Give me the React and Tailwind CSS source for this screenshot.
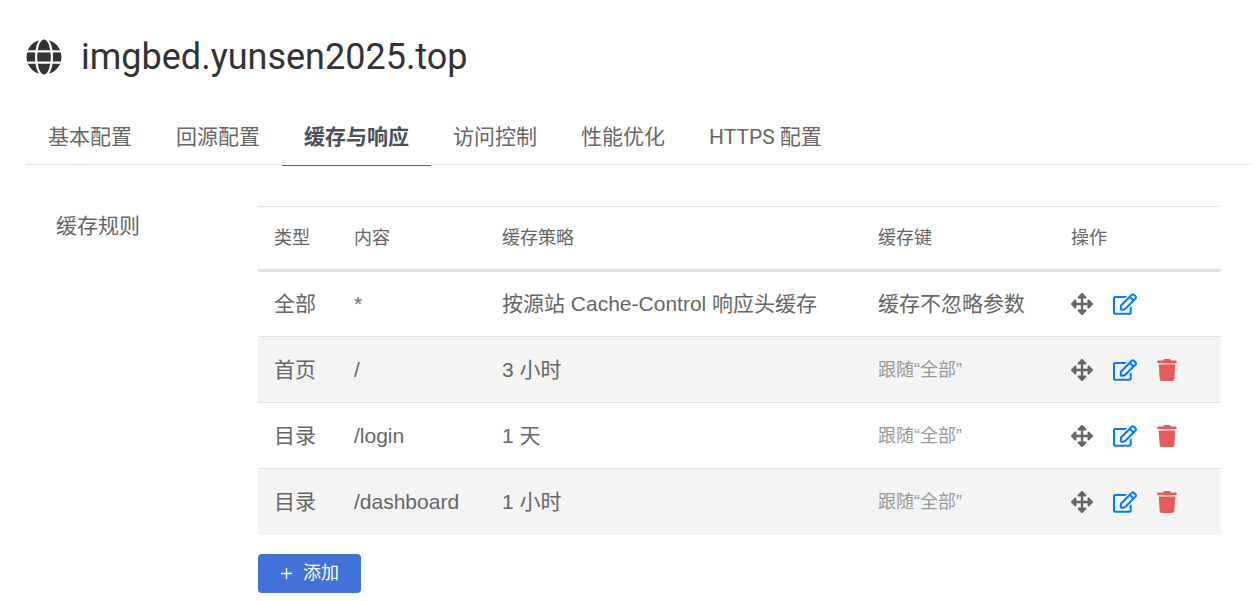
import { FaGlobe, FaArrowsAlt, FaRegEdit, FaTrash } from "react-icons/fa";

const tabs = ["基本配置", "回源配置", "缓存与响应", "访问控制", "性能优化", "HTTPS 配置"];
const activeTab = "缓存与响应";

const rules = [
  { type: "全部", content: "*", policy: "按源站 Cache-Control 响应头缓存", cacheKey: "缓存不忽略参数", isDefault: true },
  { type: "首页", content: "/", policy: "3 小时", cacheKey: "跟随“全部”" },
  { type: "目录", content: "/login", policy: "1 天", cacheKey: "跟随“全部”" },
  { type: "目录", content: "/dashboard", policy: "1 小时", cacheKey: "跟随“全部”" },
];

function Tabs() {
  return (
    <nav className="mt-7 flex border-b border-[#dee2e6] font-[Roboto,'Noto_Sans_CJK_SC',sans-serif]">
      {tabs.map((tab) => (
        <a
          key={tab}
          href="#"
          aria-current={tab === activeTab ? "page" : undefined}
          className={
            tab === activeTab
              ? "-mb-0.5 border-b border-[#606266] bg-white px-[22px] py-[11px] leading-8 font-bold text-[#495057]"
              : "px-[22px] py-[11px] leading-8"
          }
        >
          {tab}
        </a>
      ))}
    </nav>
  );
}

function RuleRow({ rule }) {
  return (
    <tr className="h-[66px] border-t border-[#dee2e6] first:border-t-0 even:bg-[#f4f4f4]">
      <td className="px-4">{rule.type}</td>
      <td className="px-4">{rule.content}</td>
      <td className="px-4">{rule.policy}</td>
      <td className={rule.isDefault ? "px-4" : "px-4 text-lg text-[#999999]"}>{rule.cacheKey}</td>
      <td className="px-4">
        <div className="flex items-center gap-5">
          <button type="button" aria-label="移动" className="cursor-move">
            <FaArrowsAlt className="size-[22px]" />
          </button>
          <button type="button" aria-label="编辑" className="text-[#007bff]">
            <FaRegEdit className="h-[22px] w-6" />
          </button>
          {!rule.isDefault && (
            <button type="button" aria-label="删除" className="text-[#e55b5b]">
              <FaTrash className="h-[22px] w-5" />
            </button>
          )}
        </div>
      </td>
    </tr>
  );
}

export default function App() {
  return (
    <main className="min-h-screen bg-white pt-8 pr-2 pb-2 pl-[26px] font-['Liberation_Sans','Noto_Sans_CJK_SC',sans-serif] text-[21px] text-[#666666]">
      <h1 className="flex items-center gap-[19px] font-[Roboto,'Noto_Sans_CJK_SC',sans-serif] text-4xl leading-[50px] text-[#333333]">
        <FaGlobe size={36} />
        imgbed.yunsen2025.top
      </h1>
      <Tabs />
      <section className="mt-[41px] flex pr-[30px] pl-[30px]">
        <h2 id="rules-title" className="w-[202px] shrink-0 pt-1 leading-8">缓存规则</h2>
        <div className="min-w-0 flex-1">
          <table aria-labelledby="rules-title" className="w-full table-fixed border-collapse border-t border-[#dee2e6] text-left">
            <colgroup>
              <col className="w-20" />
              <col className="w-[148px]" />
              <col className="w-[376px]" />
              <col className="w-[193px]" />
              <col />
            </colgroup>
            <thead className="border-b-3 border-[#dee2e6]">
              <tr className="h-[64px] text-lg">
                <th className="px-4 font-normal">类型</th>
                <th className="px-4 font-normal">内容</th>
                <th className="px-4 font-normal">缓存策略</th>
                <th className="px-4 font-normal">缓存键</th>
                <th className="px-4 font-normal">操作</th>
              </tr>
            </thead>
            <tbody>
              {rules.map((rule) => (
                <RuleRow key={rule.type + rule.content} rule={rule} />
              ))}
            </tbody>
          </table>
          <button
            type="button"
            className="mt-[19px] flex h-[39px] items-center gap-2.5 rounded bg-[#4272d7] px-[22px] text-lg text-white"
          >
            <svg viewBox="0 0 13 13" className="size-[13px]" aria-hidden="true">
              <path d="M6.5 1v11M1 6.5h11" stroke="currentColor" strokeWidth="1.4" />
            </svg>
            添加
          </button>
        </div>
      </section>
    </main>
  );
}
